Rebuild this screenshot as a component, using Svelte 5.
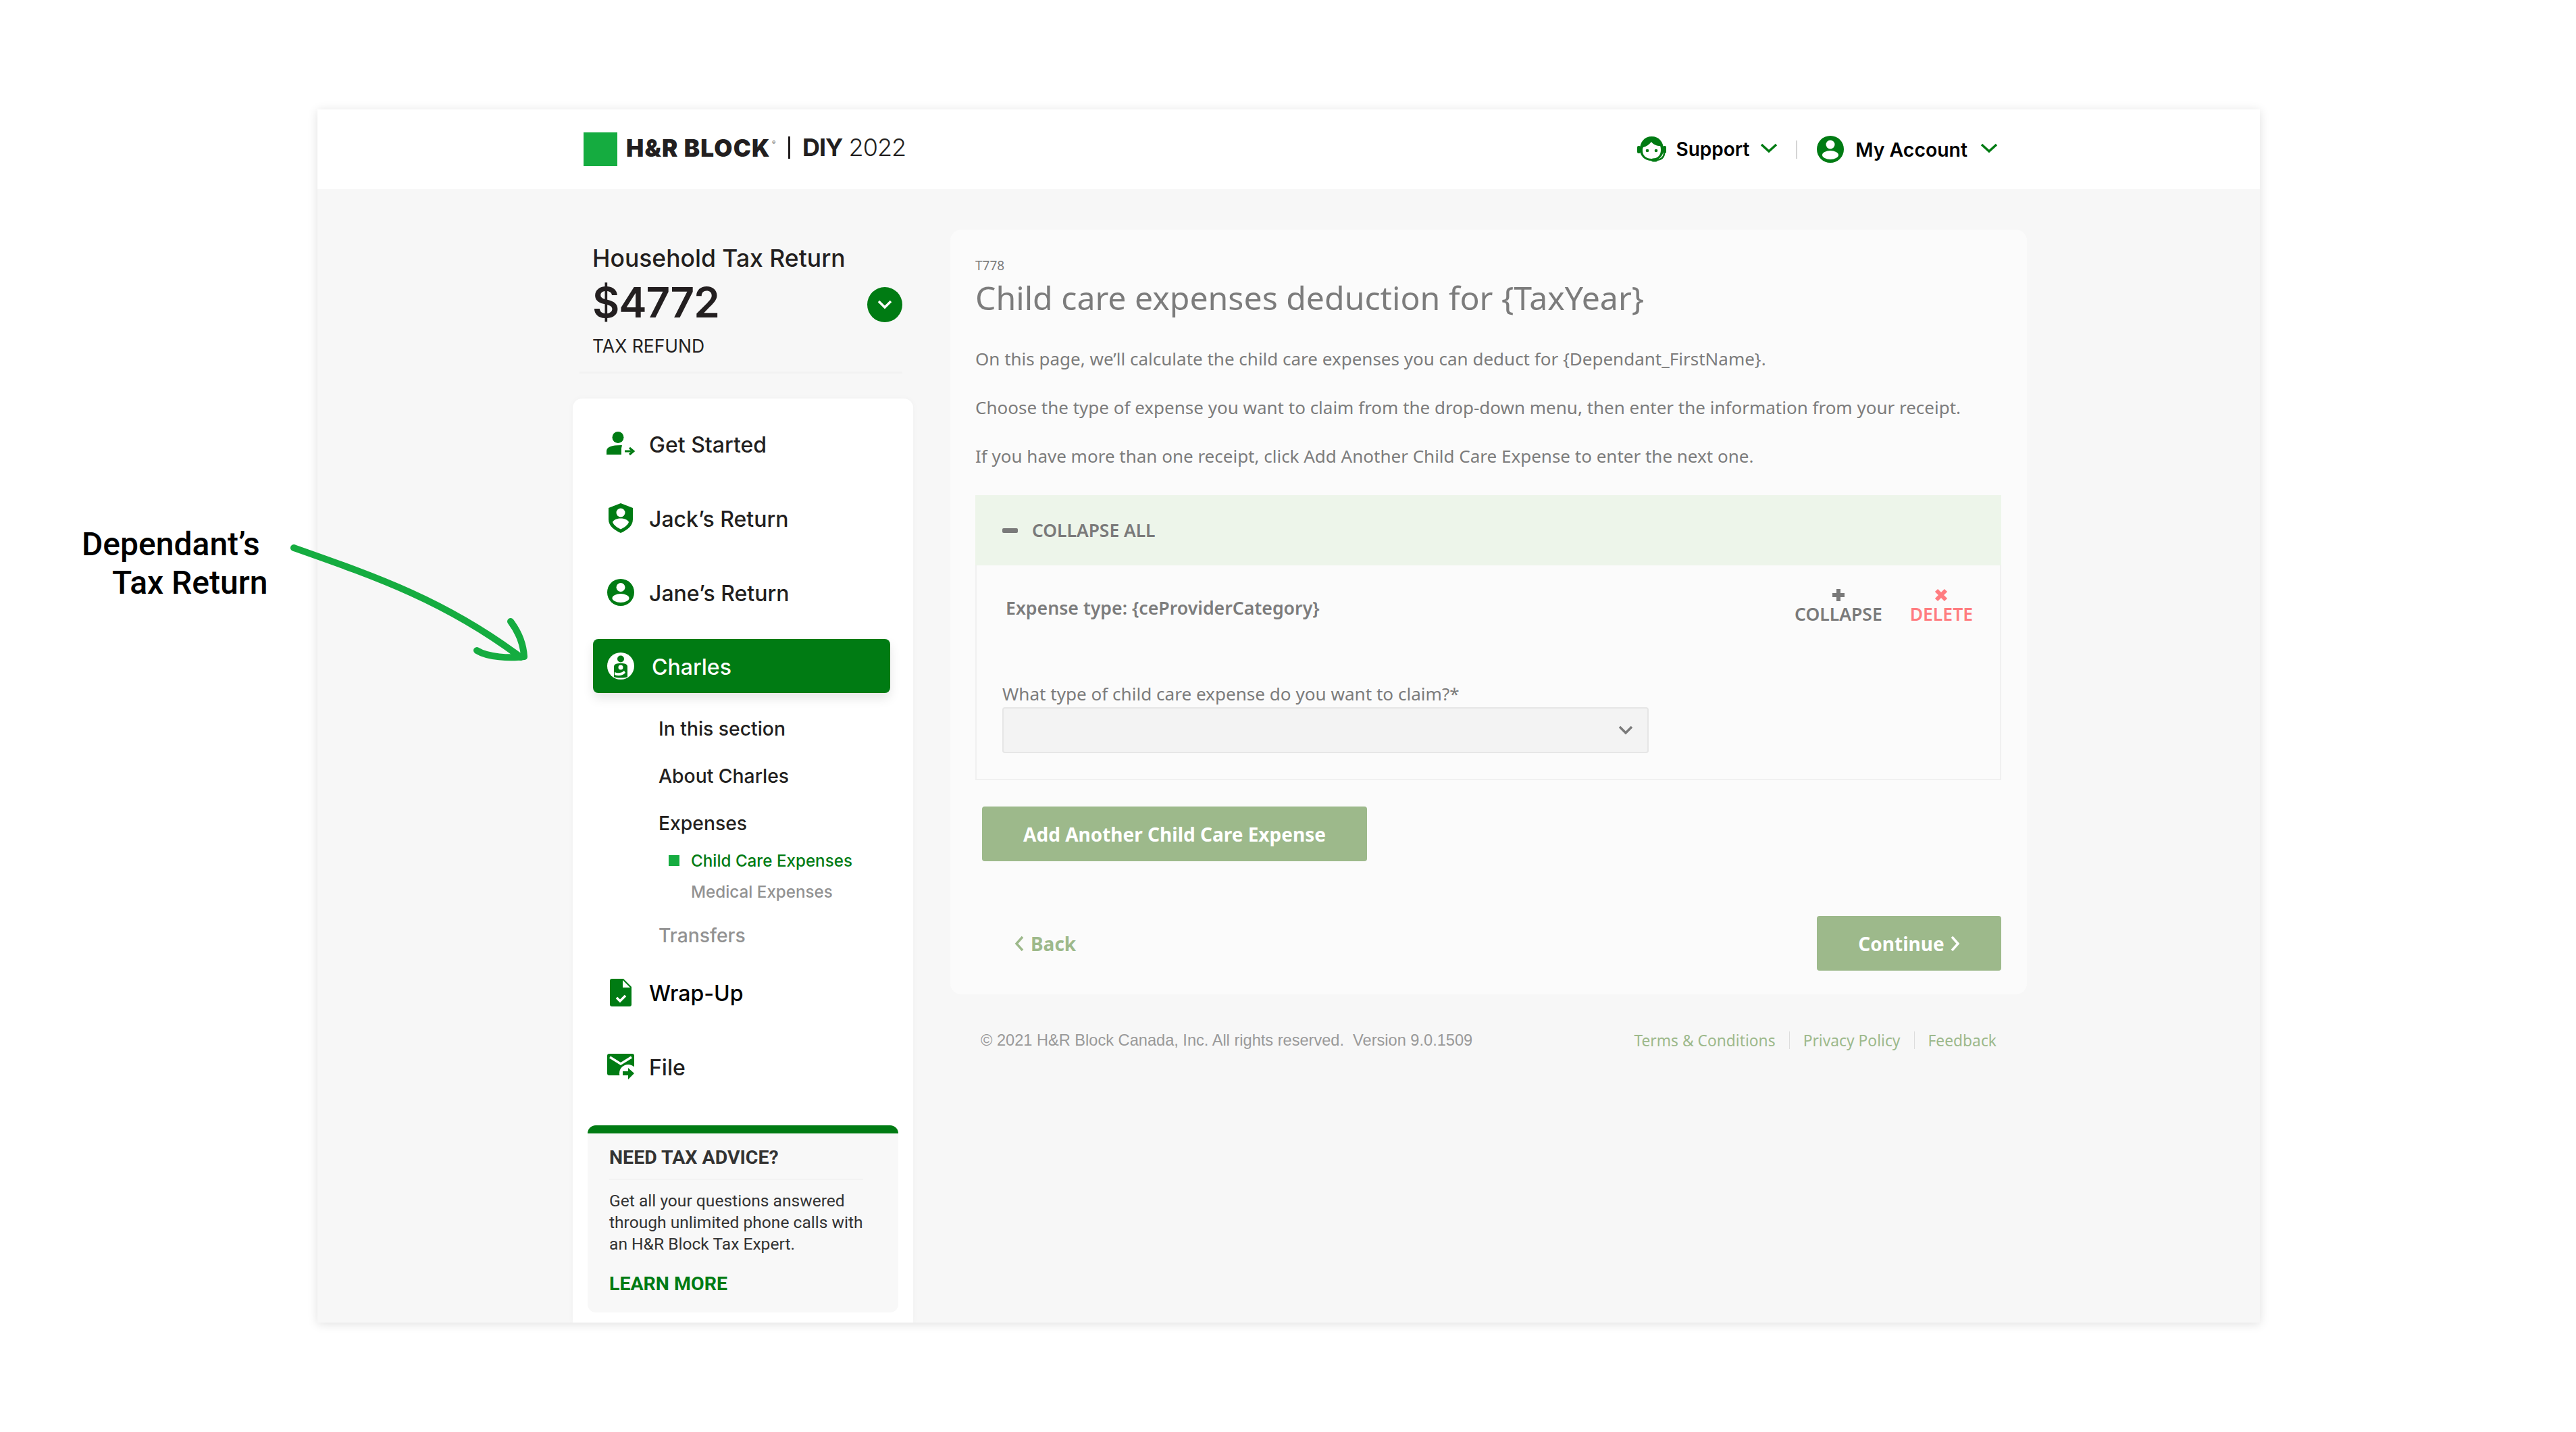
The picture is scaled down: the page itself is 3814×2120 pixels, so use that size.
<script>
const navTop = [
  { label: "Get Started", icon: "start" },
  { label: "Jack’s Return", icon: "shield" },
  { label: "Jane’s Return", icon: "person" }
];

const paragraphs = [
  "On this page, we’ll calculate the child care expenses you can deduct for {Dependant_FirstName}.",
  "Choose the type of expense you want to claim from the drop-down menu, then enter the information from your receipt.",
  "If you have more than one receipt, click Add Another Child Care Expense to enter the next one."
];
</script>

<div class="page">
  <div class="note">Dependant’s<br /><span class="note2">Tax Return</span></div>
  <svg class="arrow" width="360" height="180" viewBox="430 805 360 180" fill="none" stroke="#15ac40" stroke-width="10" stroke-linecap="round" stroke-linejoin="round">
    <path d="M435 811C560 855 660 890 771 973" />
    <path d="M756 920C768 936 775 955 776 972C755 975 722 973 706 963" />
  </svg>

  <div class="window">
    <header class="topbar">
      <div class="brand">
        <span class="logo-square"></span>
        <span class="logo-name">H&amp;R BLOCK</span><span class="logo-reg">®</span>
        <span class="logo-sep"></span>
        <span class="logo-diy"><b>DIY</b> 2022</span>
      </div>
      <div class="top-links">
        <svg class="top-icon" width="43" height="38" viewBox="0 0 43 38">
          <path d="M4 19C4 8 11 0 21.500 0C32 0 39 8 39 19C39 29 32 36 21.500 36C11 36 4 29 4 19Z" fill="#007b13" />
          <path d="M8 21C8 29 14 33 21.500 33C30 33 35 28 35 20C35 17 34.500 15 34 14C29 14 24 12 21 8C18 12 13 15 9 16C8 17.500 8 19 8 21Z" fill="#fff" />
          <circle cx="15" cy="21" r="2.300" fill="#007b13" />
          <circle cx="28" cy="21" r="2.300" fill="#007b13" />
          <rect x="0" y="14" width="5" height="11" rx="2" fill="#007b13" />
          <rect x="38" y="14" width="5" height="11" rx="2" fill="#007b13" />
          <path d="M40 24C40 31 35 35 26 35" stroke="#007b13" stroke-width="2.500" fill="none" />
          <rect x="21" y="32.500" width="9" height="5" rx="2.500" fill="#007b13" />
        </svg>
        <span class="top-text">Support</span>
        <svg class="top-chev" width="26" height="14" viewBox="0 0 26 14"><path d="M2 2L13 12L24 2" fill="none" stroke="#007b13" stroke-width="3.500" /></svg>
        <span class="top-sep"></span>
        <svg class="top-icon" width="40" height="40" viewBox="0 0 40 40">
          <circle cx="20" cy="20" r="20" fill="#007b13" />
          <circle cx="20" cy="13" r="6.500" fill="#fff" />
          <ellipse cx="20" cy="28.500" rx="12" ry="6.500" fill="#fff" />
        </svg>
        <span class="top-text wide">My Account</span>
        <svg class="top-chev last" width="26" height="14" viewBox="0 0 26 14"><path d="M2 2L13 12L24 2" fill="none" stroke="#007b13" stroke-width="3.500" /></svg>
      </div>
    </header>

    <div class="content">
      <aside class="side">
        <div class="summary">
          <div class="sum-title">Household Tax Return</div>
          <div class="sum-row">
            <span class="sum-amount">$4772</span>
            <span class="sum-toggle">
              <svg width="24" height="16" viewBox="0 0 24 16"><path d="M3 3L12 12L21 3" fill="none" stroke="#fff" stroke-width="3.500" /></svg>
            </span>
          </div>
          <div class="sum-label">TAX REFUND</div>
        </div>

        <nav class="side-card">
          {#each navTop as item}
            <div class="nav-item">
              <span class="nav-icon">
                {#if item.icon === "start"}
                  <svg width="42" height="36" viewBox="0 0 42 36">
                    <circle cx="17" cy="8.500" r="8.500" fill="#007b13" />
                    <path d="M0 34V29C0 23 7 20 22 20C24 20 22 22 22 26V34Z" fill="#007b13" />
                    <path d="M27 29H37M34 24L40 29L34 34" fill="none" stroke="#007b13" stroke-width="3" />
                  </svg>
                {:else if item.icon === "shield"}
                  <svg width="36" height="44" viewBox="0 0 36 44">
                    <path d="M18 0L36 7V24C36 34 27 40 18 44C9 40 0 34 0 24V7Z" fill="#007b13" />
                    <circle cx="18" cy="14" r="6.500" fill="#fff" />
                    <path d="M6 28C8 24 13 22.500 18 22.500C23 22.500 28 24 30 28C28 33 23 36 18 38.500C13 36 8 33 6 28Z" fill="#fff" />
                  </svg>
                {:else}
                  <svg width="40" height="40" viewBox="0 0 40 40">
                    <circle cx="20" cy="20" r="20" fill="#007b13" />
                    <circle cx="20" cy="12.500" r="6.500" fill="#fff" />
                    <ellipse cx="20" cy="28.500" rx="12.500" ry="6.500" fill="#fff" />
                  </svg>
                {/if}
              </span>
              <span class="nav-label">{item.label}</span>
            </div>
          {/each}

          <div class="nav-active">
            <span class="nav-icon">
              <svg width="40" height="40" viewBox="0 0 40 40">
                <circle cx="20" cy="20" r="20" fill="#fff" />
                <circle cx="20" cy="9.500" r="5" fill="#007b13" />
                <path d="M10 21C10 17 14 16 20 16C26 16 30 17 30 21V36C27 38 13 38 10 36Z" fill="#007b13" />
                <circle cx="20" cy="22" r="3.500" fill="#fff" />
                <path d="M11 29C15 31 21 31 25 27L27 30C22 35 16 35 11 33Z" fill="#fff" />
              </svg>
            </span>
            <span class="nav-active-label">Charles</span>
          </div>

          <div class="sub-list">
            <div class="sub">In this section</div>
            <div class="sub">About Charles</div>
            <div class="sub">Expenses</div>
            <div class="subsub current"><span class="marker"></span>Child Care Expenses</div>
            <div class="subsub">Medical Expenses</div>
            <div class="sub muted">Transfers</div>
          </div>

          <div class="nav-item">
            <span class="nav-icon">
              <svg width="32" height="41" viewBox="0 0 32 41">
                <path d="M3 0H20L32 12V38C32 40 31 41 29 41H3C1 41 0 40 0 38V3C0 1 1 0 3 0Z" fill="#007b13" />
                <path d="M19 2V13H30Z" fill="#fff" />
                <path d="M10 28L15 33L23 25" fill="none" stroke="#fff" stroke-width="3.500" />
              </svg>
            </span>
            <span class="nav-label strong">Wrap-Up</span>
          </div>
          <div class="nav-item">
            <span class="nav-icon">
              <svg width="40" height="38" viewBox="0 0 40 38">
                <rect x="0" y="0" width="40" height="32" rx="3" fill="#007b13" />
                <path d="M4 5L20 15L36 5" fill="none" stroke="#fff" stroke-width="3.500" />
                <circle cx="31" cy="29" r="13" fill="#fff" />
                <path d="M23 26H31V21L40 29L31 38V32H23Z" fill="#007b13" />
              </svg>
            </span>
            <span class="nav-label">File</span>
          </div>

          <div class="help">
            <div class="help-title">NEED TAX ADVICE?</div>
            <p class="help-text">Get all your questions answered through unlimited phone calls with an H&amp;R Block Tax Expert.</p>
            <div class="help-link">LEARN MORE</div>
          </div>
        </nav>
      </aside>

      <div class="main-col">
        <main class="card">
          <div class="form-code">T778</div>
          <h1>Child care expenses deduction for {"{TaxYear}"}</h1>
          {#each paragraphs as p}
            <p class="para">{p}</p>
          {/each}

          <div class="accordion">
            <div class="acc-head"><span class="minus"></span>COLLAPSE ALL</div>
            <div class="acc-body">
              <div class="acc-row">
                <span class="expense">Expense type: {"{ceProviderCategory}"}</span>
                <div class="acc-actions">
                  <div class="action">
                    <svg width="20" height="22" viewBox="0 0 20 22"><path d="M10 2V20M1 11H19" stroke="#7a7a7a" stroke-width="6" /></svg>
                    <span>COLLAPSE</span>
                  </div>
                  <div class="action danger">
                    <svg width="20" height="20" viewBox="0 0 20 20"><path d="M3 3L17 17M17 3L3 17" stroke="#ff7c80" stroke-width="6" /></svg>
                    <span>DELETE</span>
                  </div>
                </div>
              </div>
              <div class="field-label">What type of child care expense do you want to claim?*</div>
              <div class="select">
                <svg width="22" height="14" viewBox="0 0 22 14"><path d="M2 2L11 11L20 2" fill="none" stroke="#7a7a7a" stroke-width="3.500" /></svg>
              </div>
            </div>
          </div>

          <div class="btn add">Add Another Child Care Expense</div>

          <div class="actions-row">
            <div class="back">
              <svg width="16" height="24" viewBox="0 0 16 24"><path d="M12 2L3 12L12 22" fill="none" stroke="#9db98b" stroke-width="3.500" /></svg>
              Back
            </div>
            <div class="btn continue">
              Continue
              <svg width="16" height="24" viewBox="0 0 16 24"><path d="M4 2L13 12L4 22" fill="none" stroke="#fff" stroke-width="3.500" /></svg>
            </div>
          </div>
        </main>

        <footer class="foot">
          <span class="copy">© 2021 H&amp;R Block Canada, Inc. All rights reserved.&nbsp; Version 9.0.1509</span>
          <div class="foot-links">
            <span>Terms &amp; Conditions</span>
            <i></i>
            <span>Privacy Policy</span>
            <i></i>
            <span>Feedback</span>
          </div>
        </footer>
      </div>
    </div>
  </div>
</div>

<style>
  :global(body) {
    margin: 0;
    background: #fff;
  }

  .page {
    position: relative;
    width: 3814px;
    height: 2120px;
    padding: 162px 0 0 470px;
    box-sizing: border-box;
    overflow: hidden;
    font-family: Inter, "Noto Sans", sans-serif;
  }

  .note {
    position: absolute;
    left: 121px;
    top: 777px;
    font-family: Roboto, sans-serif;
    font-weight: 500;
    font-size: 48px;
    line-height: 57px;
    color: #000;
    white-space: nowrap;
    z-index: 2;
  }

  .note2 {
    margin-left: 45px;
  }

  .arrow {
    position: absolute;
    left: 430px;
    top: 805px;
    z-index: 2;
  }

  .window {
    width: 2876px;
    height: 1796px;
    background: #f7f7f7;
    box-shadow: 0 2px 14px rgba(0, 0, 0, 0.13);
    overflow: hidden;
  }

  .topbar {
    height: 118px;
    background: #fff;
    display: flex;
    align-items: center;
    justify-content: space-between;
    padding: 0 388px 0 394px;
  }

  .brand {
    display: flex;
    align-items: center;
  }

  .logo-square {
    width: 50px;
    height: 50px;
    background: #15ac40;
    margin-right: 13px;
  }

  .logo-name {
    font-weight: 900;
    font-size: 35px;
    color: #231f20;
    letter-spacing: 1.2px;
    width: 216px;
    white-space: nowrap;
    margin-top: -4px;
  }

  .logo-reg {
    font-size: 8px;
    color: #555;
    align-self: flex-start;
    margin: 10px 0 0 0;
    width: 8px;
  }

  .logo-sep {
    width: 3px;
    height: 33px;
    background: #231f20;
    margin: -6px 18px 0 16px;
  }

  .logo-diy {
    font-weight: 300;
    font-size: 36px;
    color: #231f20;
    margin-top: -6px;
    letter-spacing: -1px;
    white-space: nowrap;
  }

  .logo-diy b {
    font-weight: 700;
  }

  .top-links {
    display: flex;
    align-items: center;
  }

  .top-text {
    font-weight: 600;
    font-size: 28px;
    color: #000;
    margin-left: 14px;
    white-space: nowrap;
  }

  .top-text.wide {
    font-size: 28.4px;
    margin-left: 17px;
  }

  .top-chev {
    margin-left: 16px;
    margin-top: -4px;
  }

  .top-chev.last {
    margin-left: 19px;
  }

  .top-sep {
    width: 2px;
    height: 27px;
    background: #d5d5d5;
    margin: 0 29px 0 27px;
  }

  .content {
    display: flex;
    padding-left: 378px;
    height: 1678px;
  }

  .side {
    width: 504px;
    display: flex;
    flex-direction: column;
    flex: none;
  }

  .summary {
    height: 273px;
    margin: 0 16px 37px 10px;
    padding: 81px 0 0 19px;
    box-sizing: border-box;
    border-bottom: 3px solid #f2f2f2;
    color: #231f20;
  }

  .sum-title {
    font-size: 35.500px;
    font-weight: 500;
    line-height: 44px;
    white-space: nowrap;
  }

  .sum-row {
    display: flex;
    align-items: center;
    justify-content: space-between;
    height: 68px;
    margin-top: 7px;
  }

  .sum-amount {
    font-size: 62px;
    font-weight: 600;
    letter-spacing: -1px;
    margin-top: 2px;
  }

  .sum-toggle {
    width: 52px;
    height: 52px;
    margin-top: 10px;
    border-radius: 50%;
    background: #007b13;
    display: flex;
    align-items: center;
    justify-content: center;
  }

  .sum-label {
    font-size: 26.500px;
    line-height: 34px;
    margin-top: 15px;
  }

  .side-card {
    flex: 1;
    background: #fff;
    border-radius: 14px 14px 0 0;
    padding-top: 12px;
    box-shadow: 0 0 10px rgba(0, 0, 0, 0.03);
  }

  .nav-item {
    height: 110px;
    display: flex;
    align-items: center;
    padding-left: 50px;
  }

  .nav-icon {
    width: 42px;
    display: flex;
    justify-content: center;
    flex: none;
    margin-right: 21px;
  }

  .nav-label {
    font-size: 32px;
    font-weight: 500;
    color: #231f20;
    white-space: nowrap;
    padding-top: 2px;
  }

  .nav-label.strong {
    color: #000;
  }

  .nav-active {
    height: 80px;
    margin: 14px 34px 22px 30px;
    background: #007b13;
    border-radius: 8px;
    display: flex;
    align-items: center;
    padding-left: 20px;
    box-shadow: 0 8px 16px rgba(0, 0, 0, 0.1);
  }

  .nav-active-label {
    font-size: 32px;
    font-weight: 500;
    color: #fff;
    margin-left: 4px;
    padding-top: 2px;
  }

  .sub-list {
    padding-left: 127px;
  }

  .sub {
    height: 60px;
    margin-bottom: 10px;
    display: flex;
    align-items: center;
    font-size: 28.300px;
    font-weight: 500;
    color: #231f20;
    padding-top: 2px;
    box-sizing: border-box;
  }

  .sub.muted {
    color: #929292;
    margin: 12px 0 0;
  }

  .sub + .subsub {
    margin-top: -8px;
  }

  .subsub {
    position: relative;
    height: 46px;
    padding: 2px 0 0 48px;
    box-sizing: border-box;
    display: flex;
    align-items: center;
    font-size: 24.200px;
    font-weight: 500;
    color: #929292;
  }

  .subsub.current {
    color: #007b13;
  }

  .marker {
    position: absolute;
    left: 15px;
    top: 16px;
    width: 16px;
    height: 16px;
    background: #15ac40;
  }

  .help {
    margin: 32px 22px 0;
    height: 277px;
    box-sizing: border-box;
    background: #f8f8f8;
    border-top: 12px solid #007b13;
    border-radius: 12px;
    padding: 0 32px;
    font-family: Roboto, sans-serif;
    color: #333;
  }

  .help-title {
    font-weight: 700;
    font-size: 28.500px;
    height: 67px;
    line-height: 72px;
    border-bottom: 2px solid #f3f3f3;
    margin-right: 20px;
    white-space: nowrap;
  }

  .help-text {
    margin: 15px 0 0;
    font-size: 24.600px;
    line-height: 32px;
    width: 385px;
  }

  .help-link {
    font-weight: 700;
    font-size: 28.500px;
    line-height: 32px;
    color: #007b13;
    margin-top: 27px;
  }

  .main-col {
    width: 1594px;
    margin-left: 55px;
    flex: none;
    padding-top: 60px;
  }

  .card {
    height: 1132px;
    box-sizing: border-box;
    background: #fbfbfb;
    border-radius: 16px;
    padding: 42px 38px 0 38px;
    font-family: "Noto Sans", sans-serif;
    color: #7c7c7c;
  }

  .form-code {
    font-size: 19px;
    line-height: 22px;
    margin-left: -1px;
  }

  h1 {
    margin: 2px 0 0 -1px;
    font-size: 48.200px;
    font-weight: 400;
    line-height: 68px;
    white-space: nowrap;
  }

  .para {
    margin: 0 0 0 -1px;
    height: 72px;
    display: flex;
    align-items: center;
    font-size: 26px;
    white-space: nowrap;
  }

  .para:first-of-type {
    margin-top: 21px;
  }

  .accordion {
    margin: 22px 0 0 -1px;
  }

  .acc-head {
    height: 104px;
    background: #edf5ea;
    display: flex;
    align-items: center;
    padding-left: 40px;
    font-size: 26.400px;
    font-weight: 600;
    color: #7a7a7a;
  }

  .minus {
    width: 23px;
    height: 7px;
    border-radius: 2px;
    background: #7a7a7a;
    margin-right: 21px;
  }

  .acc-body {
    height: 318px;
    box-sizing: border-box;
    border: solid #f0f0f0;
    border-width: 0 2px 2px 2px;
    padding: 0 0 0 38px;
  }

  .acc-row {
    height: 173px;
    display: flex;
    justify-content: space-between;
    align-items: flex-start;
  }

  .expense {
    font-size: 26.700px;
    font-weight: 600;
    margin: 44px 0 0 5px;
    white-space: nowrap;
  }

  .acc-actions {
    display: flex;
    gap: 41px;
    margin: 33px 40px 0 0;
  }

  .action {
    display: flex;
    flex-direction: column;
    align-items: center;
    font-size: 26.500px;
    font-weight: 600;
    line-height: 30px;
    color: #7a7a7a;
  }

  .action svg {
    height: 22px;
    margin-bottom: 2px;
  }

  .action.danger {
    color: #ff7c80;
  }

  .field-label {
    font-size: 26.100px;
    line-height: 34px;
    margin-bottom: 3px;
    white-space: nowrap;
  }

  .select {
    width: 957px;
    height: 68px;
    box-sizing: border-box;
    background: #f3f3f3;
    border: 2px solid #e6e6e6;
    border-radius: 4px;
    display: flex;
    align-items: center;
    justify-content: flex-end;
    padding-right: 21px;
  }

  .btn {
    height: 81px;
    box-sizing: border-box;
    background: #9db98b;
    border-radius: 4px;
    color: #fff;
    font-size: 28px;
    font-weight: 700;
    display: flex;
    align-items: center;
    justify-content: center;
    white-space: nowrap;
  }

  .add {
    width: 570px;
    margin: 39px 0 0 9px;
  }

  .actions-row {
    display: flex;
    align-items: center;
    justify-content: space-between;
    margin-top: 81px;
    padding-right: 0;
  }

  .back {
    display: flex;
    align-items: center;
    gap: 8px;
    margin-left: 57px;
    font-size: 28px;
    font-weight: 700;
    color: #9db98b;
  }

  .continue {
    width: 273px;
    gap: 7px;
  }

  .foot {
    display: flex;
    justify-content: space-between;
    align-items: center;
    height: 136px;
    padding: 0 45px 0 45px;
    font-size: 22.800px;
    color: #999;
    font-family: "Noto Sans", sans-serif;
  }

  .copy {
    font-family: "Liberation Sans", sans-serif;
    font-size: 23.600px;
    white-space: nowrap;
  }

  .foot-links {
    display: flex;
    align-items: center;
    gap: 20px;
    color: #9db98b;
  }

  .foot-links i {
    width: 1px;
    height: 26px;
    background: #ddd;
  }
</style>
